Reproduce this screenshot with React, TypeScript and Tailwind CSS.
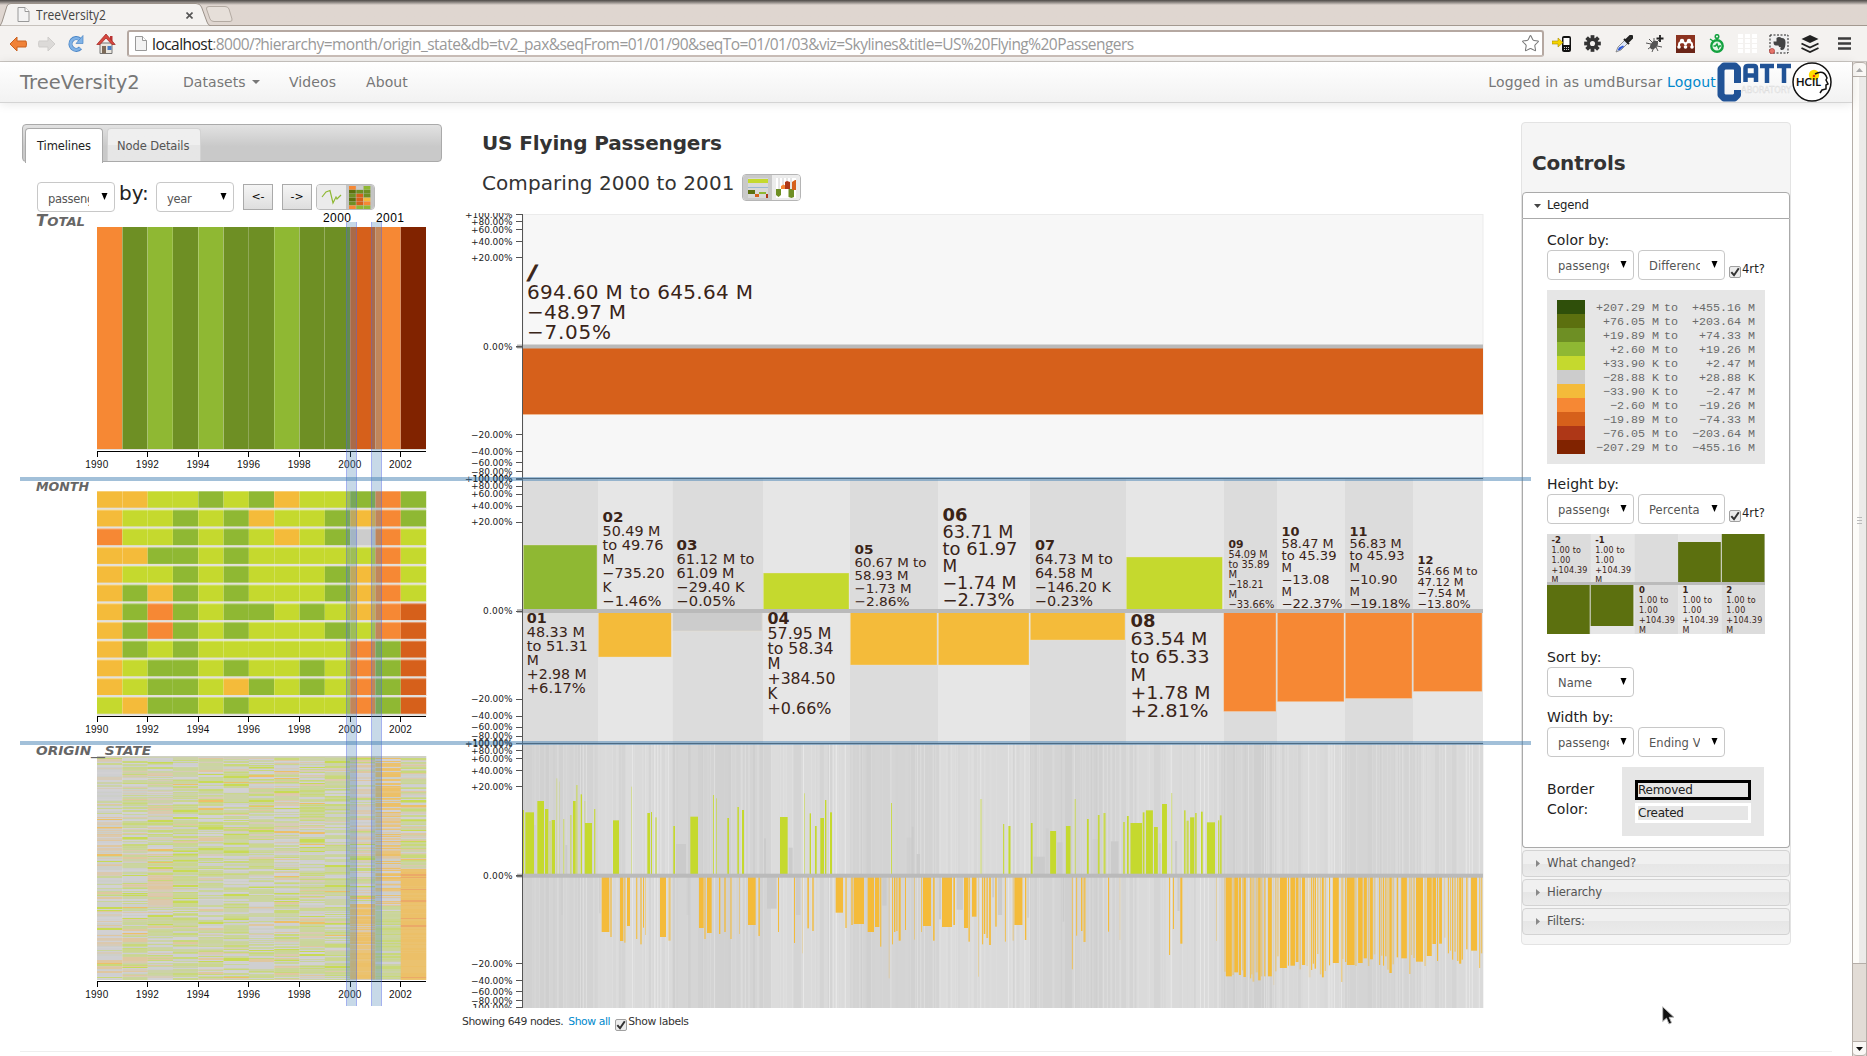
import React from "react";
import { Star } from "lucide-react";

const C: Record<string, string> = {
  K: "#2f4f0a",
  M: "#5c700f",
  G: "#6e8f24",
  L: "#8fb833",
  C: "#c5d92e",
  N: "#cccccc",
  Y: "#f4bb3a",
  O: "#f68834",
  D: "#d6601b",
  B: "#ae3717",
  R: "#812300",
};

const ANNUAL = "OGLGLGGLGGDOR";
const MONTHLY = [
  "YYCCLCLYCCLOL",
  "YCCLCLYCCLYOL",
  "OCCLCLCYCLNOC",
  "YYLLCLCCCCCOC",
  "YCCLCLCCCLYOC",
  "YLYLCLCCCLYOC",
  "YLOLCLLCLCYOD",
  "YLOLCLCCCLCOD",
  "YLCLCCCCCCOLD",
  "YCLLCLCCLCOLD",
  "YCLLCYLCLCOLD",
  "CYLLCLCCCCOLD",
];

function rng(seed: number) {
  let s = seed;
  return () => {
    s = (s * 1664525 + 1013904223) % 4294967296;
    return s / 4294967296;
  };
}

type TextLine = { t: string; w?: number };

const X0 = 97;
const CW = 329 / 13;

function YearAxis({ y }: { y: number }) {
  return (
    <g>
      <rect x={X0} y={y} width={329} height={1} fill="#000" />
      {[0, 2, 4, 6, 8, 10, 12].map((i) => (
        <g key={i}>
          <rect x={Math.floor(X0 + i * CW)} y={y} width={1} height={6} fill="#000" />
          <text
            x={X0 + i * CW - 0.3}
            y={y + 16.5}
            textAnchor="middle"
            textLength={23}
            fontSize={10}
            fontFamily="Liberation Sans, sans-serif"
            fill="#111"
          >
            {1990 + i}
          </text>
        </g>
      ))}
    </g>
  );
}

const GREYS = ["#cfcfd1", "#d2d1d3", "#cdcfc9"];
const GREENS = ["#cbd68f", "#cad59a", "#c9d87a", "#ccd2a8", "#cbd5a0"];
const TANS = ["#dfc7a0", "#dbc9ae", "#d6cbb9"];
const ORANGES = ["#ecc068", "#ebc26f", "#e9c47c"];
const pick = (a: string[], r: number) => a[Math.floor(r * a.length)];

function stateCells() {
  const cells: { c: number; y: number; h: number; f: string }[] = [];
  const green = [0.15, 0.5, 0.45, 0.75, 0.55, 0.66, 0.5, 0.5, 0.6, 0.62, 0.3, 0.1, 0.55];
  const tan = [0.35, 0.2, 0.22, 0.05, 0.1, 0.05, 0.1, 0.15, 0.12, 0.06, 0.35, 0.6, 0.2];
  for (let c = 0; c < 13; c++) {
    const r = rng(77 + c * 991);
    let y = 756;
    while (y < 980) {
      const h = Math.min(r() < 0.75 ? 1 : 2, 980 - y);
      const v = r();
      let f = "";
      if (c === 12 && y > 868) f = r() < 0.1 ? "#eba968" : pick(ORANGES.slice(0, 2), v);
      else if (c === 10 && y > 905) f = v < 0.85 ? pick(ORANGES, r()) : pick(TANS, r());
      else if (c === 11 && y > 905) f = v < 0.9 ? pick(GREENS, r()) : pick(GREYS, r());
      else if (c === 11 && v < 0.7) f = pick(y < 810 ? ORANGES : TANS.concat(ORANGES), r());
      else if (c === 2 && y > 872 && y < 906) f = v < 0.8 ? pick(TANS, r()) : pick(GREENS, r());
      else if (v < green[c]) f = r() < 0.07 ? "#c8da55" : pick(GREENS, r());
      else if (v < green[c] + tan[c]) f = r() < 0.12 ? "#ecc068" : pick(TANS, r());
      else f = pick(GREYS, r());
      cells.push({ c, y, h, f });
      y += h;
    }
  }
  return cells;
}
const STATE_CELLS = stateCells();

function Heading({ x, y, w, size, children }: { x: number; y: number; w: number; size: number; children: React.ReactNode }) {
  return (
    <text
      x={x}
      y={y}
      textLength={w}
      lengthAdjust="spacingAndGlyphs"
      fontSize={size}
      fontWeight="bold"
      fontStyle="italic"
      fill="#666"
      fontFamily="DejaVu Sans, sans-serif"
    >
      {children}
    </text>
  );
}

function Timelines() {
  const pitch = 18.73;
  return (
    <svg className="-ml-0.5 block h-[797px] w-[422px]" viewBox="20 211 422 797">
      <Heading x={36} y={226} w={49} size={15}>
        T<tspan fontSize={12}>OTAL</tspan>
      </Heading>
      <g fontSize={12} fontFamily="Liberation Sans, sans-serif" fill="#000">
        <text x={323} y={222} textLength={28}>2000</text>
        <text x={376} y={222} textLength={28}>2001</text>
      </g>
      {ANNUAL.split("").map((k, i) => (
        <g key={i}>
          <rect x={X0 + i * CW} y={227} width={CW} height={222.5} fill={C[k]} />
          {i > 0 && <rect x={Math.floor(X0 + i * CW)} y={227} width={1} height={222.5} fill="#fff" opacity={0.13} />}
        </g>
      ))}
      <rect x={X0} y={449} width={329} height={1} fill="#e1ddd8" />
      <YearAxis y={451} />

      <Heading x={36} y={491} w={53} size={12}>MONTH</Heading>
      {MONTHLY.map((row, j) => (
        <g key={j}>
          {row.split("").map((k, i) => (
            <rect key={i} x={X0 + i * CW} y={491 + j * pitch} width={CW + 0.2} height={17.7} fill={C[k]} />
          ))}
          <rect x={X0} y={491 + j * pitch} width={329} height={1} fill="#fff" opacity={0.3} />
          <rect x={X0} y={507.7 + j * pitch} width={329} height={2} fill="#e2e0dc" />
        </g>
      ))}
      {MONTHLY[0].split("").map((_, i) => (
        <rect key={i} x={Math.floor(X0 + i * CW)} y={491} width={1} height={224} fill="#fff" opacity={i ? 0.13 : 0} />
      ))}
      <YearAxis y={716} />

      {STATE_CELLS.map((s, i) => (
        <rect key={i} x={X0 + s.c * CW} y={s.y} width={CW + 0.3} height={s.h} fill={s.f} />
      ))}
      <rect x={X0} y={756} width={329} height={1.5} fill="#cfcfc4" />
      <Heading x={36} y={755} w={115} size={12}>ORIGIN__STATE</Heading>
      <YearAxis y={981} />

      {[346, 371].map((x) => (
        <g key={x}>
          <rect x={x} y={222} width={11} height={784} fill="#4682b4" opacity={0.3} />
          <rect x={x} y={222} width={1} height={784} fill="#5555ff" opacity={0.3} />
          <rect x={x + 10} y={222} width={1} height={784} fill="#5555ff" opacity={0.3} />
        </g>
      ))}
    </svg>
  );
}

const TICKS: [number, string][] = [
  [-132, "+100.00%"],
  [-125, "+80.00%"],
  [-117, "+60.00%"],
  [-105, "+40.00%"],
  [-89, "+20.00%"],
  [0, "0.00%"],
  [88, "−20.00%"],
  [105, "−40.00%"],
  [116, "−60.00%"],
  [125, "−80.00%"],
  [132, "−100.00%"],
];

function PercentAxis({ zero }: { zero: number }) {
  return (
    <g>
      {TICKS.map(([d, label]) => (
        <g key={label}>
          <rect x={516} y={Math.round(zero + d)} width={7} height={1} fill="#555" />
          <text
            x={512.5}
            y={zero + d + 3.6}
            textAnchor="end"
            textLength={label.length === 5 ? 29.5 : label.length === 7 ? 41.5 : 47.5}
            fontSize={9}
            fontFamily="DejaVu Sans, sans-serif"
            fill="#222"
          >
            {label}
          </text>
        </g>
      ))}
    </g>
  );
}

const EDGES = [523, 598, 672.3, 763, 850, 938, 1030, 1126, 1223.4, 1277, 1345, 1413, 1483];

const MONTH_BARS: { k: string; end: number; x: number; size: number; y: number; lines: TextLine[] }[] = [
  { k: "L", end: 545, x: 527.3, size: 14, y: 623, lines: [{ t: "01", w: 19 }, { t: "48.33 M", w: 57 }, { t: "to 51.31", w: 60 }, { t: "M" }, { t: "+2.98 M", w: 59 }, { t: "+6.17%", w: 58 }] },
  { k: "Y", end: 657, x: 603, size: 14, y: 522, lines: [{ t: "02", w: 20 }, { t: "50.49 M", w: 57 }, { t: "to 49.76", w: 60 }, { t: "M" }, { t: "−735.20", w: 61 }, { t: "K" }, { t: "−1.46%", w: 58 }] },
  { k: "N", end: 631, x: 677, size: 14, y: 550, lines: [{ t: "03", w: 20 }, { t: "61.12 M to", w: 77 }, { t: "61.09 M", w: 57 }, { t: "−29.40 K", w: 67 }, { t: "−0.05%", w: 58 }] },
  { k: "C", end: 573, x: 768, size: 15, y: 623.8, lines: [{ t: "04", w: 21 }, { t: "57.95 M", w: 63 }, { t: "to 58.34", w: 65 }, { t: "M" }, { t: "+384.50", w: 67 }, { t: "K" }, { t: "+0.66%", w: 63 }] },
  { k: "Y", end: 665, x: 855, size: 13, y: 554, lines: [{ t: "05", w: 18 }, { t: "60.67 M to", w: 71 }, { t: "58.93 M", w: 53 }, { t: "−1.73 M", w: 56 }, { t: "−2.86%", w: 54 }] },
  { k: "Y", end: 665, x: 943, size: 17, y: 521, lines: [{ t: "06", w: 24 }, { t: "63.71 M", w: 70 }, { t: "to 61.97", w: 74 }, { t: "M" }, { t: "−1.74 M", w: 73 }, { t: "−2.73%", w: 71 }] },
  { k: "Y", end: 640, x: 1035.4, size: 14, y: 550, lines: [{ t: "07", w: 19 }, { t: "64.73 M to", w: 77 }, { t: "64.58 M", w: 57 }, { t: "−146.20 K", w: 75 }, { t: "−0.23%", w: 57 }] },
  { k: "C", end: 557, x: 1131, size: 18, y: 627, lines: [{ t: "08", w: 24 }, { t: "63.54 M", w: 76 }, { t: "to 65.33", w: 78 }, { t: "M" }, { t: "+1.78 M", w: 79 }, { t: "+2.81%", w: 77 }] },
  { k: "O", end: 711.5, x: 1229, size: 10, y: 548, lines: [{ t: "09", w: 14 }, { t: "54.09 M", w: 38 }, { t: "to 35.89", w: 40 }, { t: "M" }, { t: "−18.21", w: 34 }, { t: "M" }, { t: "−33.66%", w: 45 }] },
  { k: "O", end: 701.7, x: 1282, size: 12, y: 535.5, lines: [{ t: "10", w: 17 }, { t: "58.47 M", w: 51 }, { t: "to 45.39", w: 54 }, { t: "M" }, { t: "−13.08", w: 47 }, { t: "M" }, { t: "−22.37%", w: 60 }] },
  { k: "O", end: 698.5, x: 1350, size: 12, y: 535.5, lines: [{ t: "11", w: 17 }, { t: "56.83 M", w: 51 }, { t: "to 45.93", w: 54 }, { t: "M" }, { t: "−10.90", w: 47 }, { t: "M" }, { t: "−19.18%", w: 60 }] },
  { k: "O", end: 691.5, x: 1418, size: 11, y: 563.5, lines: [{ t: "12", w: 15 }, { t: "54.66 M to", w: 59 }, { t: "47.12 M", w: 45 }, { t: "−7.54 M", w: 47 }, { t: "−13.80%", w: 52 }] },
];

// Each bar: [x, width, far edge, opacity]
type Bar = [number, number, number, number?];
const UP_A: Bar[] = [
  [219, 3, 225], [226, 26, 232], [262, 20, 198], [285, 10, 222], [298, 4, 258, 0.5], [305, 10, 255], [319, 3, 130, 0.4], [327, 3, 140, 0.2],
  [339, 4, 252, 0.5], [360, 5, 240, 0.5], [369, 8, 198], [378, 5, 150, 0.5], [392, 4, 178], [403, 3, 198, 0.4], [405, 21, 264], [432, 4, 222, 0.8],
  [489, 18, 256], [543, 3, 155, 0.4], [592, 8, 234], [603, 3, 231], [616, 4, 247, 0.8], [670, 5, 273], [721, 23, 245], [789, 3, 180, 0.8],
  [798, 3, 190, 0.6], [832, 5, 249], [862, 5, 216, 0.9], [876, 6, 225], [990, 23, 246], [1062, 3, 175, 0.5], [1079, 4, 235], [1095, 5, 273],
  [1111, 11, 249], [1125, 4, 195], [1140, 6, 232], [1323, 3, 204, 0.8],
];
const UP_A_FLAT: Bar[] = [[252, 6, 270, 0.5], [346, 6, 330], [678, 30, 327], [942, 6, 310], [1016, 12, 338], [1370, 15, 308, 0.5], [1385, 6, 275], [1400, 10, 357]];
const DOWN_A: Bar[] = [
  [455, 23, 591], [480, 6, 606, 0.6], [510, 10, 618], [522, 5, 623, 0.6], [531, 9, 573], [558, 4, 612, 0.8], [571, 4, 628, 0.9], [579, 3, 578],
  [585, 3, 600, 0.5], [630, 18, 606], [655, 7, 617, 0.6], [747, 14, 579], [763, 4, 612, 0.8], [771, 14, 594], [807, 4, 597], [823, 4, 591],
  [841, 4, 612, 0.8], [868, 2, 597, 0.7], [894, 23, 570], [925, 5, 603, 0.8], [984, 3, 591], [1032, 3, 624], [1057, 2, 655, 0.4], [1072, 5, 580, 0.9],
  [1087, 4, 588], [1157, 22, 533], [1186, 4, 579, 0.9], [1204, 4, 570], [1211, 31, 567], [1253, 19, 591], [1275, 13, 576], [1290, 4, 635, 0.8],
  [1316, 3, 730, 0.3], [1326, 3, 628, 0.9], [1332, 4, 591], [1338, 5, 588, 0.7], [1346, 6, 617], [1365, 3, 585], [1392, 2, 614, 0.7], [1413, 3, 591, 0.7],
  [1419, 24, 573], [1449, 5, 617, 0.9], [1476, 30, 576], [1510, 5, 570], [1542, 12, 579], [1555, 5, 620, 0.8],
];
const DOWN_A_FLAT: Bar[] = [[333, 5, 540, 0.5], [448, 3, 535], [951, 29, 521], [1038, 13, 540], [1297, 13, 512], [1467, 6, 553], [1520, 18, 524], [710, 8, 540, 0.5]];
const UP_B: Bar[] = [
  [57, 6, 192, 0.35], [123, 3, 267], [138, 6, 273], [202, 5, 264], [257, 17, 288], [302, 13, 273], [327, 3, 192, 0.7], [362, 5, 252], [393, 5, 240, 0.9],
  [409, 6, 234, 0.8], [465, 5, 261, 0.8], [476, 5, 243], [486, 33, 264], [521, 5, 232], [530, 20, 226], [553, 11, 276], [576, 14, 207], [602, 3, 174, 0.5],
  [639, 4, 226], [646, 6, 257, 0.8], [656, 12, 247], [670, 5, 234, 0.8], [687, 5, 230], [704, 23, 262], [736, 3, 256], [741, 5, 241, 0.9],
];
const UP_B_FLAT: Bar[] = [[210, 32, 365], [245, 8, 280, 0.5], [277, 15, 322], [378, 15, 313, 0.5], [430, 22, 319], [567, 5, 325], [613, 6, 318]];
const DOWN_B: Bar[] = [
  [34, 13, 545], [52, 2, 725, 0.5], [63, 3, 628], [68, 4, 597], [75, 5, 609, 0.8], [83, 5, 630], [100, 5, 575, 0.8], [128, 3, 620, 0.8], [150, 3, 617, 0.5],
  [155, 23, 570], [185, 4, 615], [319, 3, 703, 0.7], [331, 3, 602, 0.9], [345, 4, 588], [352, 6, 621, 0.8], [422, 3, 590], [455, 2, 615, 0.4],
  [596, 3, 660], [607, 3, 582], [628, 6, 626], [730, 2, 618, 0.5], [754, 3, 710, 0.6], [758, 17, 724], [776, 5, 720, 0.4], [782, 11, 712], [795, 6, 720],
  [804, 3, 706, 0.5], [808, 7, 726], [827, 3, 730, 0.8], [830, 4, 718, 0.4], [834, 5, 740, 0.5], [843, 6, 712, 0.4], [850, 7, 736, 0.9], [858, 4, 724, 0.5],
  [867, 4, 724, 0.8], [878, 11, 724], [893, 3, 750, 0.2], [899, 3, 709, 0.7], [905, 3, 664, 0.7], [912, 20, 699], [935, 3, 692], [942, 13, 692], [957, 8, 681],
  [968, 4, 703, 0.5], [975, 9, 690], [988, 3, 693, 0.4], [994, 6, 727, 0.2], [1001, 3, 705], [1006, 3, 686], [1011, 4, 701], [1018, 4, 657, 0.6], [1026, 4, 718, 0.5],
  [1032, 5, 727], [1040, 3, 708, 0.6], [1052, 3, 691], [1063, 17, 684], [1087, 3, 741, 0.7], [1090, 3, 672, 0.5], [1098, 3, 681], [1103, 22, 690], [1127, 4, 693, 0.5],
  [1135, 13, 684], [1151, 9, 670], [1163, 4, 693, 0.5], [1169, 8, 673], [1180, 4, 658, 0.4], [1195, 3, 690], [1201, 3, 662, 0.7], [1206, 3, 692], [1212, 4, 664, 0.8],
  [1218, 4, 704, 0.5], [1224, 7, 714], [1233, 4, 688, 0.5], [1245, 4, 667], [1258, 16, 670], [1281, 3, 717, 0.8], [1286, 3, 660, 0.5], [1292, 5, 669, 0.5],
  [1300, 20, 680], [1324, 4, 693, 0.5], [1331, 14, 663], [1347, 10, 627], [1360, 3, 678], [1366, 8, 626], [1381, 3, 608, 0.5], [1391, 3, 655, 0.9], [1397, 3, 647, 0.7],
  [1403, 3, 674], [1409, 5, 650, 0.5], [1417, 4, 678, 0.8], [1423, 6, 686], [1430, 4, 674, 0.9], [1443, 4, 643, 0.9], [1457, 17, 647], [1480, 3, 699, 0.8], [1485, 4, 655, 0.7],
];
const DOWN_B_FLAT: Bar[] = [[0, 8, 524], [92, 5, 487], [108, 12, 540], [192, 4, 548], [293, 4, 560], [620, 6, 528]];

function Bars({ data, fill, x0, k, up }: { data: Bar[]; fill: string; x0: number; k: number; up: boolean }) {
  return (
    <g fill={fill}>
      {data.map(([x, w, e, o], i) => {
        const far = 735 + e / 3;
        return (
          <rect
            key={i}
            x={x0 + x / k}
            width={w / k}
            y={up ? far : 876}
            height={up ? 875 - far : far - 876}
            opacity={o ?? 1}
          />
        );
      })}
    </g>
  );
}

function stripes() {
  const out: { x: number; w: number; f: string }[] = [];
  const dark = ["#d3d3d3", "#d1d1d1", "#d5d5d5", "#cfcfcf", "#d4d4d4"];
  const light = ["#dadada", "#d8d8d8", "#dcdcdc", "#d4d4d4", "#dadada"];
  for (let m = 0; m < 12; m++) {
    const a = EDGES[m];
    const b = EDGES[m + 1];
    const r = rng(5 + m);
    const set = m % 2 ? light : dark;
    let x = a;
    while (x < b) {
      const w = Math.min(1 + r() * r() * 9, b - x);
      out.push({ x, w: w + 0.3, f: pick(set, r()) });
      x += w;
    }
    [0.46, 0.76, 0.8, 0.84, 0.94].forEach((f) => out.push({ x: a + f * (b - a), w: 0.9, f: m % 2 ? "#e8e8e8" : "#dfdfdf" }));
  }
  return out;
}
const STRIPES = stripes();

function ZeroLine({ y }: { y: number }) {
  return (
    <g>
      <rect x={517} y={y - 2} width={966} height={4} fill="#bababa" />
      <rect x={516} y={y} width={7} height={1} fill="#555" />
    </g>
  );
}

function Skylines() {
  return (
    <svg className="block h-[795px] w-[1022px]" viewBox="462 213 1022 795">
      <rect x={523} y={214.5} width={960} height={265} fill="#f7f7f7" stroke="#ebebeb" />
      <rect x={523} y={347} width={960} height={67} fill={C.D} />
      <rect x={523} y={414} width={960} height={1} fill="#f0b890" />
      {EDGES.slice(0, 12).map((x, i) => (
        <rect key={x} x={x} y={479} width={EDGES[i + 1] - x} height={265} fill={i % 2 ? "#e6e6e6" : "#dcdcdc"} />
      ))}
      {MONTH_BARS.map((b, i) => {
        const up = b.end < 611;
        return (
          <rect
            key={i}
            x={EDGES[i] + 0.3}
            width={EDGES[i + 1] - EDGES[i] - 1.3}
            y={up ? b.end : 612}
            height={up ? 611 - b.end : b.end - 612}
            fill={C[b.k]}
            stroke="#f1e6d2"
            strokeOpacity={0.5}
            strokeWidth={0.7}
          />
        );
      })}
      {STRIPES.map((s, i) => (
        <rect key={i} x={s.x} y={743} width={s.w} height={265} fill={s.f} />
      ))}
      <Bars data={UP_A_FLAT} fill="#cbcbcb" x0={450} k={3} up />
      <Bars data={DOWN_A_FLAT} fill="#cbcbcb" x0={450} k={3} up={false} />
      <Bars data={UP_B_FLAT} fill="#cbcbcb" x0={960} k={2.851} up />
      <Bars data={DOWN_B_FLAT} fill="#cbcbcb" x0={960} k={2.851} up={false} />
      <Bars data={UP_A} fill={C.C} x0={450} k={3} up />
      <Bars data={DOWN_A} fill={C.Y} x0={450} k={3} up={false} />
      <Bars data={UP_B} fill={C.C} x0={960} k={2.851} up />
      <Bars data={DOWN_B} fill={C.Y} x0={960} k={2.851} up={false} />
      <ZeroLine y={346.5} />
      <ZeroLine y={611} />
      <ZeroLine y={875.7} />
      <rect x={516} y={478} width={967} height={1} fill="#555" />
      <rect x={516} y={743} width={967} height={1} fill="#555" />
      <rect x={522} y={214} width={1} height={794} fill="#555" />
      <PercentAxis zero={346} />
      <PercentAxis zero={610.7} />
      <PercentAxis zero={875.3} />
      <g fontFamily="DejaVu Sans, sans-serif" fill="#3a2418">
        <g fontSize={20}>
          <text x={529} y={279} fontWeight="bold" fontStyle="italic" stroke="#3a2418" strokeWidth={1}>/</text>
          <text x={527} y={299} textLength={226}>694.60 M to 645.64 M</text>
          <text x={527} y={319} textLength={99}>−48.97 M</text>
          <text x={527} y={339} textLength={84}>−7.05%</text>
        </g>
        {MONTH_BARS.map((b, i) => (
          <g key={i} fontSize={b.size}>
            {b.lines.map((l, j) => (
              <text
                key={j}
                x={b.x - 0.5}
                y={b.y + j * b.size}
                fontWeight={j ? "normal" : "bold"}
                lengthAdjust="spacingAndGlyphs"
                textLength={l.w ? l.w + 1 : undefined}
              >
                {l.t}
              </text>
            ))}
          </g>
        ))}
      </g>
    </svg>
  );
}

function MiniChart() {
  const cols = [
    { n: "-2", up: false, e: 100 },
    { n: "-1", up: false, e: 92 },
    { n: "0", up: true, e: 48 },
    { n: "1", up: true, e: 8 },
    { n: "2", up: true, e: 0 },
  ];
  return (
    <svg className="mt-2.5 block h-[100px] w-[218px]" viewBox="0 0 218 100">
      {cols.map((c, i) => {
        const x = i * 43.7;
        const base = c.up ? 59.3 : 9.3;
        return (
          <g key={c.n}>
            <rect x={x} y={0} width={44} height={100} fill={i % 2 ? "#e6e6e6" : "#dcdcdc"} />
            {i !== 2 && <rect x={x} width={42.7} y={c.up ? c.e : 51} height={c.up ? 49 - c.e : c.e - 51} fill={C.M} />}
            <g fontSize={8} fontFamily="DejaVu Sans, sans-serif" fill="#3a2418">
              <text x={x + 4.5} y={base} fontWeight="bold" fontSize={8.5}>{c.n}</text>
              <text x={x + 4.5} y={base + 10} textLength={29.5}>1.00 to</text>
              <text x={x + 4.5} y={base + 20} textLength={19}>1.00</text>
              <text x={x + 4.5} y={base + 30} textLength={36}>+104.39</text>
              <text x={x + 4.5} y={base + 40}>M</text>
            </g>
          </g>
        );
      })}
      <rect x={0} y={48} width={218} height={3} fill="#bbb" />
    </svg>
  );
}

function Select({ label, narrow = false }: { label: string; narrow?: boolean }) {
  return (
    <span
      className={
        narrow
          ? "flex h-[30px] w-[78px] shrink-0 items-center rounded border border-[#c8c8c8] bg-white pl-[9px] pr-1.5 pt-[3px]"
          : "flex h-[30px] w-[87px] shrink-0 items-center rounded border border-[#c8c8c8] bg-white pl-2.5 pr-1.5 pt-0.5"
      }
    >
      <span
        className={
          narrow
            ? "w-[42px] overflow-hidden whitespace-nowrap pl-px text-[11.5px] leading-4 tracking-[-0.3px] text-[#555]"
            : "w-[51px] overflow-hidden whitespace-nowrap text-[11.5px] leading-4 text-[#555]"
        }
      >
        {label}
      </span>
      <svg className="mb-1 ml-auto h-[7px] w-[7px]" viewBox="0 0 7 7">
        <path d="M0.5 0h6L3.5 7z" fill="#000" />
      </svg>
    </span>
  );
}

function Check() {
  return (
    <svg className="block h-[12px] w-[12px] shrink-0" viewBox="0 0 12 12">
      <rect x={0.5} y={0.5} width={11} height={11} rx={1.5} fill="#ececec" stroke="#a0a0a0" />
      <path d="M2.3 6.2 5 9.2 9.8 2.2" fill="none" stroke="#333" strokeWidth={2} />
    </svg>
  );
}

const SCALE: [string, string, string][] = [
  ["K", "+207.29 M", "+455.16 M"],
  ["M", "+76.05 M", "+203.64 M"],
  ["G", "+19.89 M", "+74.33 M"],
  ["L", "+2.60 M", "+19.26 M"],
  ["C", "+33.90 K", "+2.47 M"],
  ["N", "−28.88 K", "+28.88 K"],
  ["Y", "−33.90 K", "−2.47 M"],
  ["O", "−2.60 M", "−19.26 M"],
  ["D", "−19.89 M", "−74.33 M"],
  ["B", "−76.05 M", "−203.64 M"],
  ["R", "−207.29 M", "−455.16 M"],
];

function Fourth() {
  return (
    <span className="ml-1 flex items-start">
      <span className="mt-4"><Check /></span>
      <span className="ml-px mt-[11px] text-[11.5px] leading-4">4rt?</span>
    </span>
  );
}

function Controls() {
  return (
    <aside className="mt-[19px] flex h-[823px] w-[270px] shrink-0 flex-col rounded border border-[#e3e3e3] bg-[#f5f5f5]">
      <h3 className="mb-4 ml-[10px] mt-[27px] h-[26px] text-[20px] font-bold leading-[26px] tracking-[-0.15px] text-[#333]">Controls</h3>
      <div className="flex h-[27px] shrink-0 items-center gap-1.5 rounded-t border border-[#aaa] bg-white pl-[11px] pt-px text-[11.7px] tracking-[-0.2px] text-[#212121]">
        <svg className="h-1 w-[7px]" viewBox="0 0 7 4"><path d="M0 0h7L3.5 4z" fill="#454545" /></svg>
        <span>Legend</span>
      </div>
      <div className="h-[629px] shrink-0 rounded-b border border-t-0 border-[#aaa] bg-white pl-6 text-[14px] leading-5 tracking-[0.05px] text-[#222]">
        <div className="mt-[11px]">Color by:</div>
        <div className="flex gap-1"><Select label="passengers" /><Select label="Difference" /><span className="-ml-1"><Fourth /></span></div>
        <div className="mt-2.5 flex h-[174px] w-[218px] bg-[#e6e6e6] py-2.5 pl-2.5">
          <div className="w-7">
            {SCALE.map(([k]) => (
              <div key={k} className="h-3.5" style={{ background: C[k] }} />
            ))}
          </div>
          <div className="ml-2.5 font-['Liberation_Mono',monospace] text-[11.7px] leading-[14px] tracking-[0px] text-[#6a6a6a]">
            {SCALE.map(([k, a, b]) => (
              <div key={k} className="flex h-3.5 pt-px">
                <span className="w-[64px] text-right whitespace-pre">{a}</span>
                <span className="w-[19px] text-right">to</span>
                <span className="w-[77px] text-right">{b}</span>
              </div>
            ))}
          </div>
        </div>
        <div className="mt-[10px]">Height by:</div>
        <div className="flex gap-1"><Select label="passengers" /><Select label="Percentage" /><span className="-ml-1"><Fourth /></span></div>
        <MiniChart />
        <div className="mt-[13px]">Sort by:</div>
        <Select label="Name" />
        <div className="mt-[10px]">Width by:</div>
        <div className="flex gap-1"><Select label="passengers" /><Select label="Ending Value" /></div>
        <div className="mt-2.5 flex">
          <div className="w-[75px] pt-3">Border<br />Color:</div>
          <div className="flex h-[69px] w-[142px] flex-col gap-[3px] bg-[#e6e6e6] px-[13px] pt-[13px] text-[12px] leading-[14px] tracking-[-0.25px]">
            <span className="h-5 border-[3px] border-black">Removed</span>
            <span className="h-5 border-[3px] border-white">Created</span>
          </div>
        </div>
      </div>
      <div className="mt-0.5 flex flex-col gap-0.5">
        {["What changed?", "Hierarchy", "Filters:"].map((t) => (
          <div key={t} className="flex h-[27px] items-center rounded border border-[#d3d3d3] bg-linear-to-b from-[#f0f0f0] from-50% via-[#e6e6e6] via-50% to-[#ebebeb] text-[11.7px] tracking-[-0.15px] text-[#555]">
            <svg className="ml-[13px] h-[7px] w-1" viewBox="0 0 4 7"><path d="M0 0v7l4-3.500z" fill="#888" /></svg>
            <span className="ml-[7px]">{t}</span>
          </div>
        ))}
      </div>
    </aside>
  );
}

function PageIcon({ className }: { className: string }) {
  return (
    <svg className={className} viewBox="0 0 12 15">
      <path d="M.5.5h7l4 4v10H.5z" fill="#f3f3f3" stroke="#999" />
      <path d="M7.500.5v4h4" fill="#fff" stroke="#999" />
    </svg>
  );
}

function Extensions() {
  return (
    <div className="flex items-center">
      <svg className="h-5 w-5" viewBox="0 0 20 20">
        <rect x={10} y={2} width={9} height={16} rx={2} fill="#111" />
        <rect x={11.500} y={4} width={6} height={7} fill="#fff" />
        <path d="M0 7h6V4l5 4.500-5 4.500v-3H0z" fill="#f5d400" stroke="#a98c00" strokeWidth={0.6} />
        <path d="M12 13.500h5M12 15.500h5" stroke="#ccc" strokeDasharray="1 1" />
      </svg>
      <svg className="ml-3 h-[17px] w-[17px]" viewBox="-9 -9 18 18">
        {[0, 45, 90, 135].map((a) => (
          <rect key={a} x={-2} y={-8.800} width={4} height={17.600} transform={`rotate(${a})`} fill="#333" />
        ))}
        <circle r={6} fill="#333" /><circle r={2.700} fill="#f4f2f0" />
      </svg>
      <svg className="ml-3.5 h-[18px] w-[18px]" viewBox="0 0 18 18">
        <path d="M1 17 3 12 10 5l3 3-7 7z" fill="#dfe8f8" stroke="#777" strokeWidth={0.8} />
        <path d="M2.500 15.500 4 12.500l4-2 1 1-4 3.500z" fill="#2a55d8" />
        <path d="M9 4l5 5M11 5l4-4c2-1 3 1 2 2l-4 4z" stroke="#222" strokeWidth={2} fill="#333" />
      </svg>
      <svg className="ml-3 h-[18px] w-[19px]" viewBox="0 0 19 18">
        <path d="M1 8l5 1M3 14l4-3M7 17l2-5M9 3v5M14 5l-3 3M17 12l-5-1M13 16l-2-4M4 4l4 4" stroke="#555" strokeWidth={1} />
        <ellipse cx={9} cy={10} rx={3.200} ry={5} transform="rotate(40 9 10)" fill="#555" />
        <path d="M15 0v7M11.500 3.500h7" stroke="#222" strokeWidth={1.800} />
      </svg>
      <svg className="ml-3 h-[18px] w-[19px]" viewBox="0 0 19 18">
        <rect width={19} height={18} fill="#8c3320" /><rect y={12} width={19} height={6} fill="#6a2417" />
        <path d="M3 12.500V9.500Q3 7 6 7T9.500 10Q10 7 13 7T16 9.500V12.500" stroke="#fff" strokeWidth={2} fill="none" />
        <circle cx={6} cy={6} r={2.200} fill="#fff" /><circle cx={13} cy={6} r={2.200} fill="#fff" />
        <circle cx={3} cy={12} r={1.800} fill="#fff" /><circle cx={9.500} cy={12} r={1.800} fill="#fff" /><circle cx={16} cy={12} r={1.800} fill="#fff" />
      </svg>
      <svg className="ml-3.5 h-[19px] w-4" viewBox="0 0 16 19">
        <circle cx={8} cy={12} r={5.700} fill="#e6f5ea" stroke="#14a240" strokeWidth={2.400} />
        <circle cx={8} cy={2.500} r={1.800} fill="none" stroke="#14a240" strokeWidth={1.500} />
        <path d="M4.500 12h2l1.500-2 1.500 4 1-2h1.500M1 5l3 2M8 4v3" stroke="#14a240" strokeWidth={1.500} fill="none" />
      </svg>
      <svg className="ml-[13px] h-[19px] w-[19px]" viewBox="0 0 19 19">
        {[0, 7, 14].map((x) => [0, 5, 10, 15].map((y) => <rect key={`${x}${y}`} x={x} y={y} width={5} height={4} fill="#fff" />))}
      </svg>
      <svg className="ml-3 h-5 w-5" viewBox="0 0 20 20">
        <rect x={1} y={1} width={18} height={18} fill="#f0f0f0" stroke="#222" strokeDasharray="2 1.500" />
        <path d="M4.500 7.500h3V4c2-1.500 4-.8 5 0 3 0 4 1.500 4 4.500 0 4-1 7.500-3.500 7.500-2.500 0-2-2.500-.5-2.500-2 0-3-1-3-2H7c-2 0-2.500-1.500-2.500-4z" fill="#444" />
        <circle cx={3} cy={17} r={2.600} fill="#e4756a" stroke="#a33" strokeWidth={0.600} />
      </svg>
      <svg className="ml-3 h-[18px] w-[18px]" viewBox="0 0 18 18">
        <path d="M9 0l8.500 4L9 8 .5 4z" fill="#222" />
        <path d="M.5 8.500 9 12.500l8.500-4M.5 13 9 17l8.500-4" fill="none" stroke="#222" strokeWidth={1.900} />
      </svg>
      <svg className="ml-[19px] h-[13px] w-[13px]" viewBox="0 0 13 13">
        <path d="M0 1.500h13M0 6.500h13M0 11.500h13" stroke="#3c3c3c" strokeWidth={2.600} />
      </svg>
    </div>
  );
}

function Browser() {
  return (
    <header className="font-['Open_Sans',sans-serif]">
      <div className="flex h-[26px] items-start border-b border-[#a39990] bg-linear-to-b from-[#4d4a47] from-0% via-[#dfd6d0] via-20% to-[#dfd6d0]">
        <div className="relative h-[26px] w-[210px]">
          <svg className="absolute inset-0 h-[26px] w-[240px]" viewBox="0 0 240 26">
            <path d="M0 26 2 22 7 6Q8 3.500 11 3.500H196Q200 3.500 201.500 7L207 22Q208 25.500 211 26z" fill="#f4f2f0" stroke="#9b928a" />
            <path d="M206.500 9Q206 6.500 209 6.500H225Q228 6.500 229 9L232 19Q232.500 21.500 230 21.500H214Q211 21.500 210 19z" fill="#e6dfd9" stroke="#b3aaa2" />
          </svg>
          <div className="relative flex h-[29px] items-center pl-[17px]">
            <PageIcon className="h-[15px] w-[13px]" />
            <span className="ml-[6px] origin-left scale-x-[0.86] text-[14px] text-[#444]">TreeVersity2</span>
            <svg className="absolute left-[186px] top-[12px] h-[7px] w-[7px]" viewBox="0 0 7 7"><path d="M.5.5l6 6M6.500.5l-6 6" stroke="#555" strokeWidth={1.600} /></svg>
          </div>
        </div>
      </div>
      <div className="flex h-9 items-center border-b border-[#c9c5c1] bg-[#f4f2f0]">
        <svg className="ml-[9px] h-4 w-[18px]" viewBox="0 0 18 16"><path d="M8 1v4h9q1 3 0 6H8v4L1 8z" fill="#f08238" stroke="#c9601f" /></svg>
        <svg className="ml-[11px] h-4 w-[18px]" viewBox="0 0 18 16"><path d="M10 1v4H1q-1 3 0 6h9v4l7-7z" fill="#dcdad8" stroke="#cfcdcb" /></svg>
        <svg className="ml-3 h-[18px] w-4" viewBox="0 0 16 18"><path d="M12.500 13A5.800 5.800 0 1 1 12 4.500" fill="none" stroke="#4b86c6" strokeWidth={4.200} /><path d="M12.500 13A5.800 5.800 0 1 1 12 4.500" fill="none" stroke="#80b2e6" strokeWidth={2.500} /><path d="M15 .5v8H8z" fill="#80b2e6" stroke="#4b86c6" strokeWidth={0.700} /></svg>
        <svg className="ml-3 h-[22px] w-[20px]" viewBox="0 0 20 22"><path d="M4 10h12v10.500H4z" fill="#ebe7df" stroke="#777" /><path d="M6 13h4v7.500H6z" fill="#7d6b58" /><rect x={11.500} y={13} width={4} height={4} fill="#4a7fc4" /><path d="M14 3h2.500v5H14z" fill="#b33" /><path d="M10 1 .8 11.500H4l6-6.500 6 6.500h3.200z" fill="#d8473f" stroke="#a5302b" strokeWidth={0.800} /></svg>
        <div className="ml-[11px] flex h-[27px] w-[1417px] items-center rounded-[3px] border-2 border-[#b5a8a1] border-b-[#c9bdb7] border-r-[#b5a8a1] bg-white pl-[6px]">
          <PageIcon className="h-[15px] w-3 shrink-0" />
          <span className="ml-[5px] w-[1371px] whitespace-nowrap text-[15.5px] leading-5 tracking-[-0.53px] text-[#999]">
            <span className="text-[#222]">localhost</span>:8000/?hierarchy=month/origin_state&amp;db=tv2_pax&amp;seqFrom=01/01/90&amp;seqTo=01/01/03&amp;viz=Skylines&amp;title=US%20Flying%20Passengers
          </span>
          <Star className="mr-0.5 h-[19px] w-[19px] shrink-0" strokeWidth={1.3} color="#777" />
        </div>
        <div className="ml-2"><Extensions /></div>
      </div>
    </header>
  );
}

function Nav() {
  return (
    <nav className="relative flex h-[41px] items-center border-b border-[#d4d4d4] bg-linear-to-b from-white to-[#f2f2f2] pl-5 text-[14px] text-[#777] shadow-[0_1px_10px_rgba(0,0,0,0.1)]">
      <span className="w-[163px] pt-px text-[19.5px]">TreeVersity2</span>
      <span className="flex w-[106px] items-center gap-[6px] tracking-[0.05px]">
        Datasets
        <svg className="h-1 w-2" viewBox="0 0 8 4"><path d="M0 0h8L4 4z" fill="#777" /></svg>
      </span>
      <span className="w-[77px] tracking-[0.1px]">Videos</span>
      <span className="tracking-[0.1px]">About</span>
      <span className="ml-auto mr-px whitespace-nowrap tracking-[0.16px]">Logged in as umdBursar <span className="text-[#08c]">Logout</span></span>
      <svg className="h-10 w-[75px]" viewBox="0 0 75 40">
        <path d="M20.500 21V6.500L18 4H7L4 7V33L7 36H17.500L20.500 33V28" fill="none" stroke="#215396" strokeWidth={7} strokeLinejoin="round" />
        <path d="M28.500 20V6Q28.500 4 31 4H37Q39 4 39 6V20M29 13.500H39M43 4H57M50 4V21M60 4H74M67 4V21" fill="none" stroke="#215396" strokeWidth={4.500} />
        <text x={24} y={31} textLength={50} lengthAdjust="spacingAndGlyphs" fontSize={9} fontFamily="DejaVu Sans, sans-serif" fill="#fafafa" stroke="#ddd" strokeWidth={0.500}>ABORATORY</text>
      </svg>
      <svg className="mr-5 h-10 w-10" viewBox="0 0 40 40">
        <circle cx={20} cy={20} r={19} fill="#fff" stroke="#111" strokeWidth={1.500} />
        <circle cx={22} cy={13} r={5.200} fill="#ffdd00" />
        <path d="M23 12q9-5 12 4l-1 2 2 4-2 1v4l-4 1-2 3" fill="none" stroke="#111" strokeWidth={1.500} />
        <text x={4} y={24} textLength={25} fontSize={11} fontWeight="bold" fontFamily="Lato, sans-serif" fill="#111">HCIL</text>
        <circle cx={22} cy={14} r={1.300} fill="#e30" />
      </svg>
    </nav>
  );
}

function Scrollbar() {
  return (
    <div className="flex w-[15px] shrink-0 flex-col border-x border-[#b5aea8] bg-[#e2dcd6]">
      <div className="flex h-[15px] items-center justify-center rounded-t border-b border-t border-[#b5aea8] bg-[#faf8f5]">
        <svg className="h-1 w-[7px]" viewBox="0 0 7 4"><path d="M0 4h7L3.500 0z" fill="#aaa" /></svg>
      </div>
      <div className="flex h-[887px] flex-col items-center justify-center gap-0.5 border-b border-[#b5aea8] bg-linear-to-r from-[#fdfcf9] from-50% to-[#ecebe9] to-50%">
        <span className="h-px w-[5px] bg-[#bbb]" /><span className="h-px w-[5px] bg-[#bbb]" /><span className="h-px w-[5px] bg-[#bbb]" />
      </div>
      <div className="mt-auto flex h-[15px] items-center justify-center rounded-b border-b border-t border-[#b5aea8] bg-[#faf8f5]">
        <svg className="h-1 w-[7px]" viewBox="0 0 7 4"><path d="M0 0h7L3.500 4z" fill="#111" /></svg>
      </div>
    </div>
  );
}

function MosaicIcon() {
  const rows = ["ONL", "MGG", "GDG", "MDY", "GDO", "OLL"];
  return (
    <svg className="h-[23px] w-[22px]" viewBox="0 0 22 23">
      {rows.map((r, j) => r.split("").map((k, i) => <rect key={`${i}${j}`} x={i * 7.300} y={j * 3.900} width={6.800} height={3.700} fill={C[k]} />))}
    </svg>
  );
}

function LeftPanel() {
  return (
    <section className="ml-[22px] w-[420px] shrink-0 pt-[21px]">
      <div className="flex h-[38px] gap-1 rounded border border-[#aaa] bg-linear-to-b from-[#e2e2e2] to-[#c9c9c9] to-60% pl-0.5 pt-[3px] text-[11.5px] tracking-[-0.1px]">
        <span className="h-[35px] w-[78px] rounded-t border border-b-0 border-[#aaa] bg-white pl-[11px] pt-[9px] leading-4 text-[#212121]">Timelines</span>
        <span className="h-[33px] w-[94px] rounded-t border border-b-0 border-[#d3d3d3] bg-linear-to-b from-[#efefef] from-50% to-[#e6e6e6] to-50% pl-[9px] pt-[9px] leading-4 text-[#555]">Node Details</span>
      </div>
      <div className="mt-5 flex h-[29px] items-start pl-[15px]">
        <Select label="passengers" narrow />
        <span className="w-[41px] pl-1 text-[20px] leading-[23px] text-[#222]">by:</span>
        <Select label="year" narrow />
        <span className="ml-[9px] mt-0.5 flex h-[26px] w-[30px] items-center justify-center border border-[#aaa] bg-linear-to-b from-[#f5f5f5] to-[#dedede] text-[11px] text-black">&lt;-</span>
        <span className="ml-[9px] mt-0.5 flex h-[26px] w-[30px] items-center justify-center border border-[#aaa] bg-linear-to-b from-[#f5f5f5] to-[#dedede] text-[11px] text-black">-&gt;</span>
        <span className="ml-1 mt-0.5 flex h-[26px] w-[59px] overflow-hidden rounded border border-[#bbb]">
          <span className="flex w-[29px] items-center justify-center bg-[#ebebeb]">
            <svg className="h-[18px] w-[22px]" viewBox="0 0 22 18"><path d="M1 9 5 4 9 2.500 12 15 15 9l1 2 4-4" fill="none" stroke="#8fb833" strokeWidth={1.200} /></svg>
          </span>
          <span className="flex flex-1 items-center justify-center bg-[#c4c4c4]"><MosaicIcon /></span>
        </span>
      </div>
      <Timelines />
    </section>
  );
}

function CenterPanel() {
  return (
    <section className="ml-5 w-[1022px] shrink-0">
      <h3 className="ml-5 mt-[28px] h-6 text-[20px] font-bold leading-6 tracking-[-0.13px] text-[#333]">US Flying Passengers</h3>
      <div className="ml-5 mt-4 flex h-[30px] items-start text-[20px] leading-6 text-[#333]">
        <span className="w-[260px] whitespace-nowrap tracking-[0.08px]">Comparing 2000 to 2001</span>
        <span className="mt-[3px] flex h-[27px] w-[59px] overflow-hidden rounded border border-[#b5b5b5]">
          <span className="flex w-[29px] items-center justify-center bg-[#c9c9c9]">
            <svg className="h-5 w-5" viewBox="0 0 20 20">
              <rect width={20} height={20} fill="#d9d9d9" /><rect y={1} width={20} height={4} fill={C.C} /><rect y={9} width={20} height={1} fill="#9bb9d2" />
              <rect y={12} width={7} height={4} fill={C.M} /><rect x={7} y={16} width={4} height={3} fill={C.D} /><rect x={11} y={14} width={7} height={2} fill={C.L} /><rect x={18} y={16} width={2} height={4} fill={C.B} />
            </svg>
          </span>
          <span className="flex flex-1 items-center justify-center bg-[#ececec]">
            <svg className="h-5 w-5" viewBox="0 0 20 20">
              <rect width={20} height={20} fill="#fff" /><path d="M3 0v11M7 0v8M11 0v4M15 0v12" stroke="#ccc" />
              <path d="M0 11h5v6l-2.500 2L0 17z" fill={C.G} /><path d="M5 8l2.500-1.500L10 8v3H5z" fill={C.O} /><path d="M9 4l2-1 3 1v7H9z" fill={C.B} /><path d="M12.500 11H18v8l-2.500 1-3-1z" fill={C.G} /><path d="M16 4l3-2h1v10h-4z" fill={C.D} />
            </svg>
          </span>
        </span>
      </div>
      <div className="mt-3"><Skylines /></div>
      <div className="mt-1 flex h-5 items-center text-[10.8px] text-[#333]">
        <span className="whitespace-nowrap tracking-[-0.45px]">Showing 649 nodes.</span>
        <span className="ml-[5px] whitespace-nowrap tracking-[-0.4px] text-[#08c]">Show all</span>
        <span className="ml-[5px] mt-1.5"><Check /></span>
        <span className="ml-px whitespace-nowrap tracking-[-0.35px]">Show labels</span>
      </div>
    </section>
  );
}

export default function App() {
  return (
    <div className="flex h-[1056px] w-[1867px] flex-col overflow-hidden bg-white font-['DejaVu_Sans',sans-serif]">
      <Browser />
      <div className="relative flex h-[994px]">
        <main className="flex w-[1852px] flex-col">
          <Nav />
          <div className="flex h-[948px]">
            <LeftPanel />
            <CenterPanel />
            <div className="ml-[37px]"><Controls /></div>
          </div>
          <div className="mx-5 border-t border-[#eee]" />
        </main>
        <Scrollbar />
        <div className="absolute left-5 top-[415px] h-1 w-[1511px] bg-[#4682b4]/50" />
        <div className="absolute left-5 top-[679px] h-1 w-[1511px] bg-[#4682b4]/50" />
        <svg className="absolute left-[1662px] top-[944px] h-5 w-[13px]" viewBox="0 0 13 20">
          <path d="M.7.7V15.500L4.500 12.200 7 18l2.600-1.200L7.200 11.300H12z" fill="#111" stroke="#bbb" />
        </svg>
      </div>
    </div>
  );
}
